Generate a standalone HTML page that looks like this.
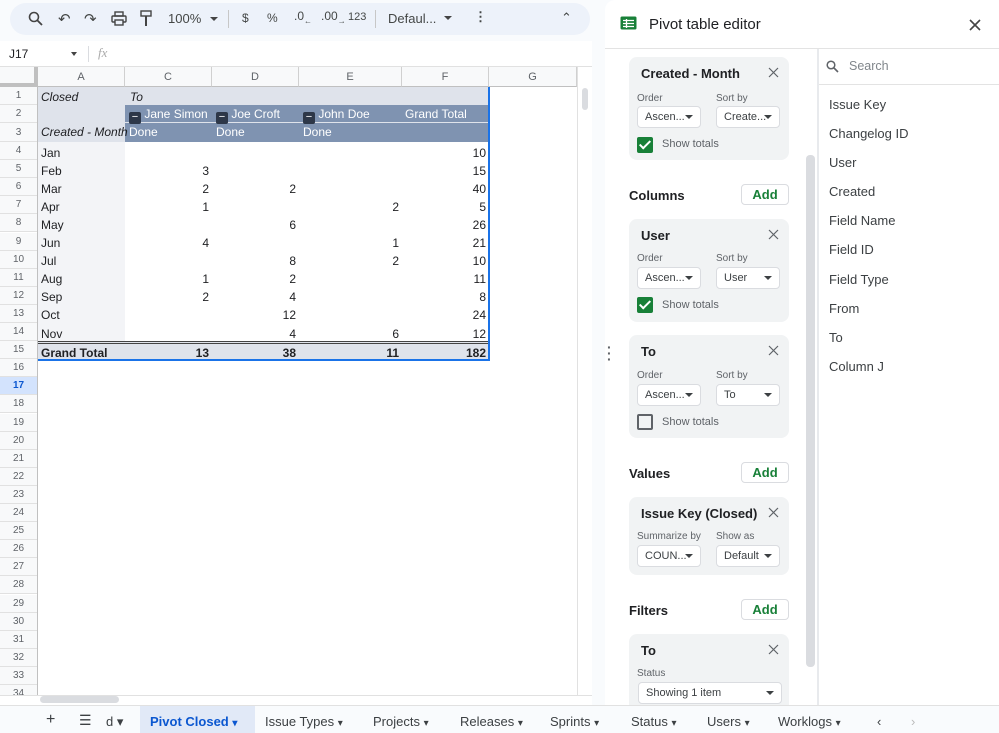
<!DOCTYPE html>
<html><head><meta charset="utf-8"><style>
*{box-sizing:border-box;margin:0;padding:0}
body{width:999px;height:733px;overflow:hidden;background:#f9fbfd;font-family:"Liberation Sans",Arial,sans-serif;position:relative;color:#202124}
.a{position:absolute}
.tb{font-size:13px;color:#444746}
.rh{position:absolute;left:0;width:37px;text-align:center;font-size:10px;color:#5f6368;border-bottom:1px solid #e1e1e1;background:#f8f9fa}
.ch{position:absolute;top:67px;height:20px;font-size:11px;color:#5f6368;text-align:center;line-height:20px;border-right:1px solid #d0d0d0;background:#f8f9fa;border-bottom:1px solid #c0c0c0}
.c{position:absolute;font-size:12px;line-height:18px;white-space:nowrap}
.r{text-align:right}
.card{position:absolute;left:629px;width:160px;background:#f1f3f4;border-radius:8px}
.ct{position:absolute;left:12px;top:9px;font-size:13px;font-weight:bold;color:#202124}
.x{position:absolute;right:10px;top:10px;width:11px;height:11px}
.lb{position:absolute;font-size:10px;color:#5f6368}
.dd{position:absolute;width:64px;height:22px;background:#fff;border:1px solid #dadce0;border-radius:4px;font-size:11px;line-height:20px;padding-left:7px;color:#3c4043}
.dd:after{content:"";position:absolute;right:7px;top:8px;border:4px solid transparent;border-top:4px solid #3c4043}
.cb{position:absolute;left:8px;width:16px;height:16px;border-radius:2px}
.on{background:#188038}
.on:after{content:"";position:absolute;left:5px;top:1px;width:4px;height:9px;border:solid #fff;border-width:0 2px 2px 0;transform:rotate(45deg)}
.off{border:2px solid #5f6368}
.st{position:absolute;left:33px;font-size:11px;color:#5f6368}
.sec{position:absolute;left:629px;font-size:13px;font-weight:bold;color:#202124}
.add{position:absolute;left:741px;width:48px;height:21px;border:1px solid #dadce0;border-radius:4px;background:#fff;color:#188038;font-size:13px;font-weight:bold;text-align:center;line-height:19px}
.f{position:absolute;left:829px;font-size:13px;color:#3c4043}
.tab{position:absolute;top:714px;font-size:13px;color:#3c4043}
</style></head><body>
<div class="a" style="left:10px;top:3px;width:580px;height:32px;background:#edf2fa;border-radius:16px"></div>
<svg class="a" style="left:28px;top:11px" width="16" height="16"><circle cx="6" cy="6" r="4.5" fill="none" stroke="#444" stroke-width="1.6"/><path d="M9.5 9.5L14 14" stroke="#444" stroke-width="1.8"/></svg>
<div class="a tb" style="left:58px;top:10px;font-size:15px">↶</div>
<div class="a tb" style="left:84px;top:10px;font-size:15px">↷</div>
<svg class="a" style="left:111px;top:11px" width="16" height="15"><rect x="4" y="1" width="8" height="4" fill="none" stroke="#444" stroke-width="1.4"/><rect x="1" y="5" width="14" height="6" rx="1" fill="none" stroke="#444" stroke-width="1.4"/><rect x="4" y="9" width="8" height="5" fill="#edf2fa" stroke="#444" stroke-width="1.4"/></svg>
<svg class="a" style="left:140px;top:10px" width="12" height="17"><rect x="1" y="1" width="10" height="5" fill="none" stroke="#444" stroke-width="1.4"/><path d="M6 6v3M6 9v7" stroke="#444" stroke-width="2"/></svg>
<div class="a tb" style="left:168px;top:11px">100%</div>
<div class="a" style="left:210px;top:17px;border:4px solid transparent;border-top:4px solid #444"></div>
<div class="a" style="left:228px;top:10px;width:1px;height:18px;background:#c7c7c7"></div>
<div class="a tb" style="left:242px;top:11px;font-size:12px">$</div>
<div class="a tb" style="left:267px;top:11px;font-size:12px">%</div>
<div class="a tb" style="left:294px;top:9px;font-size:12px">.0<sub style="font-size:8px">←</sub></div>
<div class="a tb" style="left:321px;top:9px;font-size:12px">.00<sub style="font-size:8px">→</sub></div>
<div class="a tb" style="left:348px;top:11px;font-size:11px">123</div>
<div class="a" style="left:375px;top:10px;width:1px;height:18px;background:#c7c7c7"></div>
<div class="a tb" style="left:388px;top:11px">Defaul...</div>
<div class="a" style="left:444px;top:16px;border:4px solid transparent;border-top:4px solid #444"></div>
<div class="a tb" style="left:474px;top:9px;font-weight:bold">⋮</div>
<div class="a tb" style="left:561px;top:10px;font-size:13px">⌃</div>
<div class="a" style="left:0;top:41px;width:592px;height:26px;background:#fff;border-bottom:1px solid #e1e1e1"></div>
<div class="a" style="left:9px;top:47px;font-size:12px">J17</div>
<div class="a" style="left:71px;top:52px;border:3.5px solid transparent;border-top:4px solid #444"></div>
<div class="a" style="left:88px;top:46px;width:1px;height:16px;background:#dadce0"></div>
<div class="a" style="left:98px;top:45px;font-size:13px;color:#aaa;font-style:italic;font-family:'Liberation Serif',serif">fx</div>
<div class="a" style="left:0;top:67px;width:577px;height:628px;background:#fff"></div>
<div class="a" style="left:0;top:67px;width:38px;height:20px;background:#f8f9fa;border-right:4px solid #c0c0c0;border-bottom:4px solid #c0c0c0"></div>
<div class="ch" style="left:38px;width:87px">A</div>
<div class="ch" style="left:125px;width:87px">C</div>
<div class="ch" style="left:212px;width:87px">D</div>
<div class="ch" style="left:299px;width:103px">E</div>
<div class="ch" style="left:402px;width:87px">F</div>
<div class="ch" style="left:489px;width:88px">G</div>
<div id="rows"></div>
<div class="a" style="left:38px;top:87px;width:451px;height:18px;background:#dfe3eb"></div>
<div class="a" style="left:38px;top:105px;width:87px;height:37px;background:#dfe3eb"></div>
<div class="a" style="left:125px;top:105px;width:364px;height:37px;background:#7f93b1"></div>
<div class="a" style="left:125px;top:122px;width:364px;height:1px;background:#dfe3eb"></div>
<div class="a" style="left:38px;top:142px;width:87px;height:199px;background:#f3f4f7"></div>
<div class="a" style="left:38px;top:341px;width:451px;height:19px;background:#dfe3eb;border-top:3px double #444"></div>
<div class="a" style="left:488px;top:87px;width:2px;height:274px;background:#1a73e8"></div>
<div class="a" style="left:38px;top:359px;width:452px;height:2px;background:#1a73e8"></div>
<div class="c" style="left:41px;top:88px;font-style:italic">Closed</div>
<div class="c" style="left:130px;top:88px;font-style:italic">To</div>
<div class="c" style="left:41px;top:123px;font-style:italic">Created - Month</div>
<div class="c" style="left:129px;top:105px;color:#fff"><span style="display:inline-block;width:12px;height:12px;background:#2d3748;border-radius:2px;vertical-align:-2px;color:#fff;text-align:center;line-height:11px;font-size:11px">−</span> Jane Simon</div>
<div class="c" style="left:216px;top:105px;color:#fff"><span style="display:inline-block;width:12px;height:12px;background:#2d3748;border-radius:2px;vertical-align:-2px;text-align:center;line-height:11px;font-size:11px">−</span> Joe Croft</div>
<div class="c" style="left:303px;top:105px;color:#fff"><span style="display:inline-block;width:12px;height:12px;background:#2d3748;border-radius:2px;vertical-align:-2px;text-align:center;line-height:11px;font-size:11px">−</span> John Doe</div>
<div class="c" style="left:405px;top:105px;color:#fff">Grand Total</div>
<div class="c" style="left:129px;top:123px;color:#fff">Done</div>
<div class="c" style="left:216px;top:123px;color:#fff">Done</div>
<div class="c" style="left:303px;top:123px;color:#fff">Done</div>
<div id="data"></div>
<div class="a" style="left:577px;top:67px;width:15px;height:628px;background:#fff;border-left:1px solid #e1e1e1"></div>
<div class="a" style="left:582px;top:88px;width:6px;height:22px;background:#dadce0;border-radius:3px"></div>
<div class="a" style="left:0;top:695px;width:592px;height:10px;background:#fff;border-top:1px solid #e1e1e1"></div>
<div class="a" style="left:40px;top:696px;width:79px;height:7px;background:#dadce0;border-radius:4px"></div>
<div class="a" style="left:605px;top:0;width:394px;height:705px;background:#fff;border-radius:10px 0 0 0"></div>
<svg class="a" style="left:620px;top:16px" width="17" height="14"><rect x="0.5" y="0.5" width="16" height="13" rx="1.5" fill="#188038"/><path d="M3 4.5h11M3 7.5h11M3 10.5h11M6.5 3v9" stroke="#fff" stroke-width="1.3"/></svg>
<div class="a" style="left:649px;top:16px;font-size:15px">Pivot table editor</div>
<svg class="a" style="left:969px;top:19px" width="12" height="12"><path d="M1 1L11 11M11 1L1 11" stroke="#444" stroke-width="1.6"/></svg>
<div class="a" style="left:605px;top:48px;width:394px;height:1px;background:#e3e3e3"></div>
<div class="a" style="left:817px;top:49px;width:2px;height:656px;background:#e8eaed"></div>
<div class="a" style="left:806px;top:155px;width:9px;height:512px;background:#dadce0;border-radius:4px"></div>
<div class="a" style="left:607px;top:344px;font-size:14px;color:#5f6368;line-height:6px;font-weight:bold">·<br>·<br>·</div>
<div class="card" style="top:57px;height:103px"><div class="ct">Created - Month</div><svg class="x"><path d="M1 1L10 10M10 1L1 10" stroke="#5f6368" stroke-width="1.2"/></svg>
<div class="lb" style="left:8px;top:36px">Order</div><div class="lb" style="left:87px;top:36px">Sort by</div>
<div class="dd" style="left:8px;top:49px">Ascen...</div><div class="dd" style="left:87px;top:49px">Create...</div>
<div class="cb on" style="top:80px"></div><div class="st" style="top:81px">Show totals</div></div>
<div class="sec" style="top:188px">Columns</div><div class="add" style="top:184px">Add</div>
<div class="card" style="top:219px;height:103px"><div class="ct">User</div><svg class="x"><path d="M1 1L10 10M10 1L1 10" stroke="#5f6368" stroke-width="1.2"/></svg>
<div class="lb" style="left:8px;top:34px">Order</div><div class="lb" style="left:87px;top:34px">Sort by</div>
<div class="dd" style="left:8px;top:48px">Ascen...</div><div class="dd" style="left:87px;top:48px">User</div>
<div class="cb on" style="top:78px"></div><div class="st" style="top:80px">Show totals</div></div>
<div class="card" style="top:335px;height:103px"><div class="ct">To</div><svg class="x"><path d="M1 1L10 10M10 1L1 10" stroke="#5f6368" stroke-width="1.2"/></svg>
<div class="lb" style="left:8px;top:35px">Order</div><div class="lb" style="left:87px;top:35px">Sort by</div>
<div class="dd" style="left:8px;top:49px">Ascen...</div><div class="dd" style="left:87px;top:49px">To</div>
<div class="cb off" style="top:79px"></div><div class="st" style="top:81px">Show totals</div></div>
<div class="sec" style="top:466px">Values</div><div class="add" style="top:462px">Add</div>
<div class="card" style="top:497px;height:78px"><div class="ct">Issue Key (Closed)</div><svg class="x"><path d="M1 1L10 10M10 1L1 10" stroke="#5f6368" stroke-width="1.2"/></svg>
<div class="lb" style="left:8px;top:34px">Summarize by</div><div class="lb" style="left:87px;top:34px">Show as</div>
<div class="dd" style="left:8px;top:48px">COUN...</div><div class="dd" style="left:87px;top:48px">Default</div></div>
<div class="sec" style="top:603px">Filters</div><div class="add" style="top:599px">Add</div>
<div class="card" style="top:634px;height:71px;border-radius:8px 8px 0 0"><div class="ct">To</div><svg class="x"><path d="M1 1L10 10M10 1L1 10" stroke="#5f6368" stroke-width="1.2"/></svg>
<div class="lb" style="left:8px;top:34px">Status</div>
<div class="dd" style="left:9px;top:48px;width:144px">Showing 1 item</div></div>
<svg class="a" style="left:826px;top:60px" width="13" height="13"><circle cx="5" cy="5" r="3.8" fill="none" stroke="#5f6368" stroke-width="1.5"/><path d="M8 8l4 4" stroke="#5f6368" stroke-width="1.6"/></svg>
<div class="a" style="left:849px;top:59px;font-size:12.5px;color:#80868b">Search</div>
<div class="a" style="left:819px;top:84px;width:180px;height:1px;background:#e3e3e3"></div>
<div class="f" style="top:97px">Issue Key</div>
<div class="f" style="top:126px">Changelog ID</div>
<div class="f" style="top:155px">User</div>
<div class="f" style="top:184px">Created</div>
<div class="f" style="top:213px">Field Name</div>
<div class="f" style="top:242px">Field ID</div>
<div class="f" style="top:272px">Field Type</div>
<div class="f" style="top:301px">From</div>
<div class="f" style="top:330px">To</div>
<div class="f" style="top:359px">Column J</div>
<div class="a" style="left:0;top:705px;width:999px;height:28px;background:#f9fbfd;border-top:1px solid #e1e1e1"></div>
<div class="a" style="left:140px;top:706px;width:115px;height:27px;background:#e1e9f7"></div>
<div class="tab" style="left:46px;font-size:16px;top:711px">+</div>
<div class="tab" style="left:79px;font-size:14px;top:712px">☰</div>
<div class="tab" style="left:106px">d ▾</div>
<div class="tab" style="left:150px;color:#0b57d0;font-weight:bold">Pivot Closed <span style="font-size:10px">▾</span></div>
<div class="tab" style="left:265px">Issue Types <span style="font-size:10px">▾</span></div>
<div class="tab" style="left:373px">Projects <span style="font-size:10px">▾</span></div>
<div class="tab" style="left:460px">Releases <span style="font-size:10px">▾</span></div>
<div class="tab" style="left:550px">Sprints <span style="font-size:10px">▾</span></div>
<div class="tab" style="left:631px">Status <span style="font-size:10px">▾</span></div>
<div class="tab" style="left:707px">Users <span style="font-size:10px">▾</span></div>
<div class="tab" style="left:778px">Worklogs <span style="font-size:10px">▾</span></div>
<div class="tab" style="left:877px">‹</div>
<div class="tab" style="left:911px;color:#bbb">›</div>
<script>
var rows=document.getElementById('rows'),h='';
var tops=[87,105,123,142];
for(var n=5;n<=35;n++)tops.push(142+(n-4)*18.1);
for(var i=0;i<34;i++){var t=tops[i],hh=tops[i+1]-t;
h+='<div class="rh" style="top:'+t+'px;height:'+hh+'px;line-height:'+hh+'px;'+(i==16?'background:#d3e3fd;color:#0b57d0;font-weight:bold;':'')+'">'+(i+1)+'</div>';}
h+='<div class="a" style="left:37px;top:67px;width:1px;height:628px;background:#c0c0c0"></div>';
rows.innerHTML=h;
var d=[['Jan','','','','10'],['Feb','3','','','15'],['Mar','2','2','','40'],['Apr','1','','2','5'],['May','','6','','26'],['Jun','4','','1','21'],['Jul','','8','2','10'],['Aug','1','2','','11'],['Sep','2','4','','8'],['Oct','','12','','24'],['Nov','','4','6','12'],['Grand Total','13','38','11','182']];
var rx=[209,296,399,486],s='';
for(var i=0;i<d.length;i++){var t=tops[i+3]+1.5+(i==11?1:0);var b=i==11?'font-weight:bold;':'';
s+='<div class="c" style="left:41px;top:'+t+'px;'+b+'">'+d[i][0]+'</div>';
for(var j=0;j<4;j++)if(d[i][j+1])s+='<div class="c r" style="left:'+(rx[j]-60)+'px;width:60px;top:'+t+'px;'+b+'">'+d[i][j+1]+'</div>';}
document.getElementById('data').innerHTML=s;
</script>
</body></html>
